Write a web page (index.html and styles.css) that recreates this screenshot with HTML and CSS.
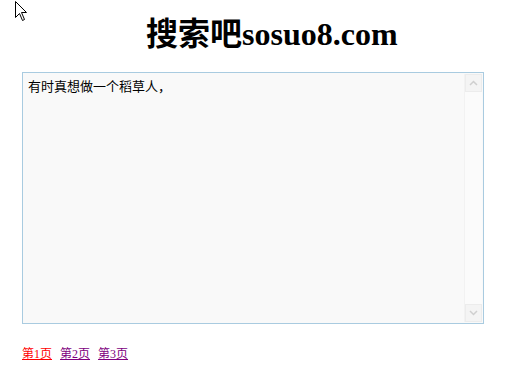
FILE: index.html
```html
<!DOCTYPE html>
<html lang="zh">
<head>
  <meta charset="UTF-8" />
  <title>搜索吧sosuo8.com</title>
  <link rel="stylesheet" href="styles.css">
</head>
<body>

  <svg class="cursor" width="13" height="21" viewBox="0 0 13 21">
    <path d="M0.5 0.5 L0.5 16.5 L4.5 12.5 L7.5 19.5 L9.5 18.5 L6.5 11.5 L11.5 11.5 Z" fill="#fff" stroke="#000" stroke-width="1"/>
  </svg>

  <h1 class="site-title">搜索吧<span class="latin">sosuo8.com</span></h1>

  <div class="text-box">
    <div class="text-content">有时真想做一个稻草人，</div>
    <div class="scrollbar">
      <div class="scroll-btn">
        <svg width="9" height="6" viewBox="0 0 9 6"><path d="M1 5 L4.5 1.5 L8 5" fill="none" stroke="#cfcfcf" stroke-width="1.5"/></svg>
      </div>
      <div class="scroll-track"></div>
      <div class="scroll-btn">
        <svg width="9" height="6" viewBox="0 0 9 6"><path d="M1 1 L4.5 4.5 L8 1" fill="none" stroke="#cfcfcf" stroke-width="1.5"/></svg>
      </div>
    </div>
  </div>

  <div class="pager">
    <a href="#" class="current">第1页</a>
    <a href="#">第2页</a>
    <a href="#">第3页</a>
  </div>

</body>
</html>
```

FILE: styles.css
```css
body {
  margin: 0;
  padding: 0 0 0 22px;
  background-color: #fff;
  color: #000;
  font-family: "Liberation Serif", "Noto Sans CJK SC", serif;
}
.cursor {
  position: absolute;
  left: 15px;
  top: 1px;
}
.site-title {
  margin: 0;
  padding: 13px 0 0 124px;
  height: 72px;
  box-sizing: border-box;
  font-size: 32px;
  line-height: 36px;
  font-weight: bold;
  font-family: "Noto Sans CJK SC", serif;
}
.site-title .latin {
  font-family: "Liberation Serif", serif;
}
.text-box {
  width: 462px;
  height: 252px;
  box-sizing: border-box;
  border: 1px solid #a9cbe0;
  background-color: #f9f9f9;
  display: flex;
}
.text-content {
  flex: 1;
  padding: 5px 5px;
  font-size: 13px;
  line-height: 16px;
  font-family: "Noto Sans CJK SC", sans-serif;
}
.scrollbar {
  width: 17px;
  margin: 1px 1px 1px 0;
  display: flex;
  flex-direction: column;
  border-left: 1px solid #f2f2f2;
}
.scroll-btn {
  height: 16px;
  display: flex;
  align-items: center;
  justify-content: center;
  background-color: #f4f4f4;
  border: 1px solid #ececec;
}
.scroll-track {
  flex: 1;
  background-color: #fbfbfb;
}
.pager {
  margin-top: 23px;
  font-size: 12px;
  line-height: 14px;
  font-family: "Liberation Serif", "Noto Sans CJK SC", serif;
}
.pager a {
  color: #800080;
  margin-right: 5px;
}
.pager a.current {
  color: #f00;
}
```
